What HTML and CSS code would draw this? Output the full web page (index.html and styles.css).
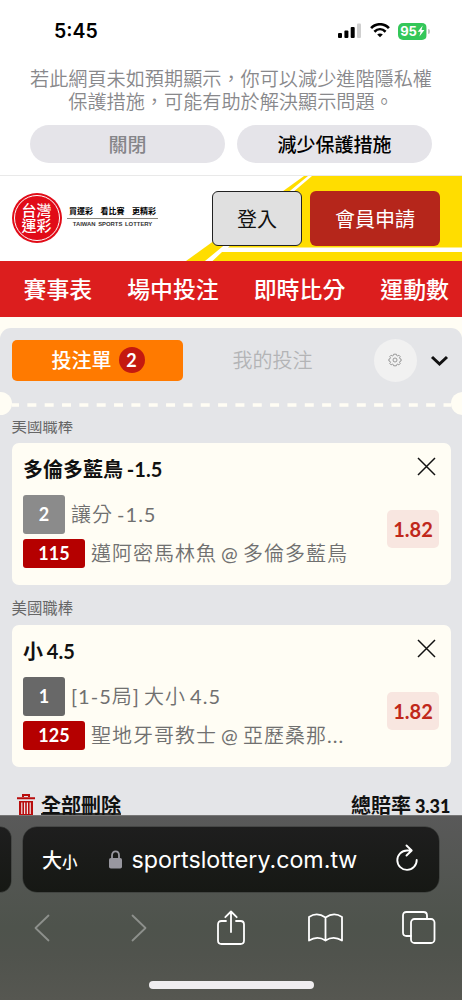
FILE: index.html
```html
<!DOCTYPE html>
<html lang="zh-Hant">
<head>
<meta charset="utf-8">
<title>台灣運彩</title>
<link rel="stylesheet" href="styles.css">
</head>
<body>
<div class="phone">
  <div class="status">
    <span class="clock">5:45</span>
    <svg class="signal" width="24" height="16" viewBox="0 0 24 16"><rect x="0" y="10" width="4" height="5" rx="1"/><rect x="6.4" y="7.4" width="4" height="7.6" rx="1"/><rect x="12.7" y="4" width="4" height="11" rx="1"/><rect x="19" y="0.5" width="4" height="14.5" rx="1" fill="#cfcfcf"/></svg>
    <svg class="wifi" width="20" height="15" viewBox="0 0 20 15" fill="none" stroke="#000" stroke-width="2.6"><path d="M1.1 5.2C6-.1 14-.1 18.9 5.2M4.4 8.7c3.3-3.2 7.900-3.200 11.200 0"/><path d="M10 14.200 7.200 11.500c1.500-1.300 4.100-1.300 5.600 0Z" fill="#000" stroke="none"/></svg>
    <div class="battery"><span>95</span><svg width="8" height="12" viewBox="0 0 7 12"><path d="M5.200.4.2 6.800h2.900L1.900 11.600 6.900 5H4Z" fill="#fff"/></svg></div>
    <span class="cap"></span>
  </div>
  <div class="notice">若此網頁未如預期顯示，你可以減少進階隱私權<br>保護措施，可能有助於解決顯示問題。</div>
  <div class="choices"><button class="pill muted">關閉</button><button class="pill">減少保護措施</button></div>

  <header class="header">
    <svg class="stripes" width="462" height="85" viewBox="0 0 462 85"><path d="M186 85 304 0h158v85Z" fill="#ffdd00"/><path d="M205 85 308 0h4L228 71.500h234v4.500H222L212.500 85Z" fill="#fff"/></svg>
    <div class="logo"><div class="seal"><span>台灣</span><span>運彩</span></div></div>
    <div class="slogan"><div class="zh"><span>買運彩</span><span>看比賽</span><span>更精彩</span></div><div class="en">TAIWAN SPORTS LOTTERY</div></div>
    <button class="login">登入</button><button class="join">會員申請</button>
  </header>
  <nav class="nav"><span>賽事表</span><span>場中投注</span><span>即時比分</span><span>運動數</span></nav>

  <main class="slip">
    <div class="tabs">
      <div class="tab">投注單<b class="count">2</b></div>
      <div class="tab2">我的投注</div>
      <div class="gear"><svg width="14" height="14" viewBox="0 0 14 14" fill="none" stroke="#858585" stroke-width=".8"><path d="M5.700 1.200h2.600l.4 1.300.9.400 1.300-.7 1.300 1.300-.7 1.300.4.900 1.200.400v1.900l-1.200.4-.4.900.7 1.300-1.300 1.300-1.300-.7-.9.400-.4 1.200H5.700l-.4-1.200-.9-.4-1.300.7-1.300-1.300.7-1.300-.4-.9-1.200-.4V6.100l1.200-.4.400-.9-.7-1.300 1.300-1.300 1.300.7.9-.4Z"/><circle cx="7" cy="7" r="2"/></svg></div>
      <svg class="chev" width="19" height="12" viewBox="0 0 19 12"><path d="m2 2 7.500 7L17 2" fill="none" stroke="#111" stroke-width="3"/></svg>
    </div>
    <div class="tear"><i class="notch"></i><svg width="439" height="4" viewBox="0 0 439 4"><path d="M-2 2h443" stroke="#fffdf4" stroke-width="3.400" stroke-dasharray="9 8.340"/></svg><i class="notch"></i></div>
    <div class="list">
      <div class="league first">美國職棒</div>
      <section class="card">
        <div class="title">多倫多藍鳥 -1.5</div>
        <svg class="close" width="19" height="19" viewBox="0 0 19 19"><path d="m1 1 17 17M18 1 1 18" stroke="#111" stroke-width="1.500"/></svg>
        <div class="row"><b class="num">2</b><span>讓分 -1.5</span></div>
        <div class="row match"><b class="code">115</b><span>邁阿密馬林魚 @ 多倫多藍鳥</span></div>
        <b class="odds">1.82</b>
      </section>
      <div class="league">美國職棒</div>
      <section class="card">
        <div class="title">小 4.5</div>
        <svg class="close" width="19" height="19" viewBox="0 0 19 19"><path d="m1 1 17 17M18 1 1 18" stroke="#111" stroke-width="1.500"/></svg>
        <div class="row"><b class="num dark">1</b><span>[1-5局] 大小 4.5</span></div>
        <div class="row match"><b class="code">125</b><span>聖地牙哥教士 @ 亞歷桑那...</span></div>
        <b class="odds">1.82</b>
      </section>
      <div class="total">
        <svg width="18" height="22" viewBox="0 0 18 22"><path d="M6 3V1h6v2M0 4.200h18" fill="none" stroke="#b80d0d" stroke-width="2"/><path d="M2 7h14v15H2Z" fill="#b80d0d"/><path d="M4.800 8.500V20M7.600 8.500V20M10.400 8.500V20M13.200 8.500V20" stroke="#eee4e6" stroke-width="1.200"/></svg>
        <span class="clear">全部刪除</span><span class="sum">總賠率 <b>3.31</b></span>
      </div>
    </div>
  </main>

  <footer class="safari">
    <div class="urls"><i class="prev"></i><div class="url">
      <span class="big">大</span><span class="small">小</span>
      <svg class="lock" width="13" height="19" viewBox="0 0 13 19"><path d="M3 9V5.500C3 0 10 0 10 5.500V9" fill="none" stroke="#98979f" stroke-width="1.800"/><rect width="13" height="10.500" y="8" rx="1.800" fill="#98979f"/></svg>
      <span class="domain">sportslottery.com.tw</span>
      <svg class="reload" width="24" height="28" viewBox="0 0 24 28" fill="none" stroke="#fff" stroke-width="1.900" stroke-linecap="round" stroke-linejoin="round"><path d="M16.500 6.500H12A9.700 9.700 0 1 0 21.700 16M11.500 1.500l5.200 5-5.200 5"/></svg>
    </div></div>
    <div class="tools">
      <svg class="back" width="16" height="28" viewBox="0 0 16 28"><path d="M14.500 1.500 1.500 14l13 12.500"/></svg>
      <svg class="forward" width="16" height="28" viewBox="0 0 16 28"><path d="m1.500 1.500 13 12.500-13 12.500"/></svg>
      <svg class="share" width="28" height="36" viewBox="0 0 28 36"><path d="M9 11H4.500Q1 11 1 14.500v16Q1 34 4.500 34h19q3.500 0 3.500-3.500v-16Q27 11 23.500 11H19M14 22V1.500M8.300 7.200 14 1.500l5.700 5.700"/></svg>
      <svg class="book" width="35" height="30" viewBox="0 0 35 30"><path d="M17.500 4.500Q9-1.500 1 4v23.500q8.500-5.300 16.500 0 8-5.300 16.500 0V4Q26-1.500 17.500 4.500ZM17.500 4.500v23"/></svg>
      <svg class="pages" width="34" height="34" viewBox="0 0 34 34"><path d="M9 25H4.500Q1 25 1 21.500v-17Q1 1 4.500 1h17Q25 1 25 4.500V8"/><rect x="9" y="8" width="23.500" height="24" rx="3.500"/></svg>
    </div>
    <div class="home"></div>
  </footer>
</div>
</body>
</html>
```
FILE: styles.css
```css
* { box-sizing: border-box; }
body { margin: 0; background: #fff; font-family: Lato, "Noto Sans CJK TC", sans-serif; }
button { border: 0; padding: 0; font-family: inherit; }
.phone { width: 462px; height: 1000px; overflow: hidden; display: flex; flex-direction: column; background: #fffdf4; }
svg { display: block; flex: none; }

.status { height: 67px; flex: none; background: #fff; display: flex; align-items: center; padding: 0 31px 5px 54px; }
.clock { font: 600 19.5px/24px Inter, sans-serif; width: 284px; flex: none; }
.wifi { margin: -1px 8px 0 8px; }
.battery { width: 29px; height: 17px; border-radius: 5px; background: linear-gradient(90deg, #34c759 95%, #a9dcb5 95%); display: flex; align-items: center; justify-content: center; color: #fff; font: 700 13px/17px Inter, sans-serif; letter-spacing: -.2px; flex: none; }
.cap { width: 2px; height: 5px; margin-left: 1px; border-radius: 0 2px 2px 0; background: #c4c4c4; flex: none; }
.notice { height: 58px; flex: none; background: #fff; color: #88888b; font: 350 19.15px/23px "Noto Sans CJK TC", sans-serif; text-align: center; white-space: nowrap; }
.choices { height: 50px; flex: none; background: #fff; padding: 0 30px; display: flex; gap: 12px; }
.pill { width: 195px; height: 38px; border-radius: 19px; background: #e5e4e9; color: #000; font: 500 19px/38px "Noto Sans CJK TC", sans-serif; }
.muted { color: #858589; }

.header { height: 86px; flex: none; position: relative; background: #fff; border-top: 1px solid #e9e9e9; display: flex; align-items: flex-start; padding: 15px 22px 0 11.5px; }
.stripes { position: absolute; left: 0; top: 0; }
.logo { width: 50px; height: 50px; border-radius: 50%; background: #e10b17; padding: 2px; margin-top: 2px; flex: none; }
.seal { width: 46px; height: 46px; border: 1px solid #fff; border-radius: 50%; color: #fff; font-size: 15px; font-weight: 500; line-height: 15px; display: flex; flex-direction: column; align-items: center; justify-content: center; }
.slogan { width: 91px; margin: 13px 0 0 5.5px; flex: none; }
.zh { display: flex; justify-content: space-between; font-size: 8px; font-weight: 700; line-height: 14px; padding: 0 2px 0 2px; height: 15px; border-bottom: 1px solid #88867c; }
.slogan .en { font: 700 5.9px/10px "Liberation Sans", sans-serif; text-align: center; white-space: nowrap; color: #333; word-spacing: 1px; }
.login, .join { position: relative; height: 55px; font-size: 20px; line-height: 52px; border-radius: 6px; flex: none; }
.login { width: 90px; margin-left: 54px; border: 1.500px solid #222; background: #e0e0e0; color: #111; }
.join { width: 130px; margin-left: 8px; background: #b5261b; color: #fff; }
.nav { height: 56px; flex: none; background: #dc1e1e; color: #fff; font-weight: 500; font-size: 22.900px; line-height: 56px; display: flex; gap: 35px; padding-left: 23.500px; white-space: nowrap; }

.slip { height: 487px; flex: none; margin-top: 11px; background: #e4e5e8; border-radius: 11px 11px 0 0; overflow: hidden; }
.tabs { height: 64px; display: flex; align-items: center; padding-left: 11.500px; }
.tab { width: 171px; height: 41px; border-radius: 5px; background: #ff7a00; color: #fff; display: flex; align-items: center; justify-content: center; gap: 7px; font-size: 20px; font-weight: 500; line-height: 40px; padding-left: 2px; }
.count { width: 26px; height: 26px; border-radius: 50%; background: #c4190f; font-size: 18px; line-height: 26px; text-align: center; }
.tab2 { color: #b3b4b6; font-size: 20px; font-weight: 350; margin-left: 50px; width: 141px; line-height: 28px; margin-top: -1px; }
.gear { width: 43px; height: 43px; border-radius: 50%; background: #f1f1f1; display: grid; place-items: center; }
.chev { margin: 2px 0 0 13px; }
.tear { height: 23px; display: flex; justify-content: space-between; align-items: center; margin: 0 -11.500px; }
.tear svg { margin-top: 3px; }
.notch { width: 23px; height: 23px; border-radius: 50%; background: #fffdf4; }
.list { margin-top: 6px; height: 394px; overflow: hidden; padding: 0 11.500px; }
.league { height: 40px; padding-top: 12px; color: #666; font-size: 15.400px; line-height: 22px; }
.first { height: 22px; padding: 0; margin-top: -6px; margin-bottom: 6px; }
.card { position: relative; height: 142px; border-radius: 7px; background: #fffdf4; padding: 14px 11.500px 0; }
.title { font-size: 20px; font-weight: 700; line-height: 24px; color: #111; word-spacing: -1px; }
.close { position: absolute; right: 15px; top: 14px; }
.row { display: flex; align-items: center; gap: 6px; height: 39px; margin-top: 14px; font-family: Lato, "Noto Sans CJK TC DemiLight", "Noto Sans CJK TC", sans-serif; font-size: 20px; font-weight: 400; letter-spacing: 1px; word-spacing: -2px; color: #707070; white-space: nowrap; }
.row span { margin-top: -2px; }
.row b { color: #fff; border-radius: 3px; text-align: center; font-size: 18px; letter-spacing: 0; }
.num { width: 42px; height: 39px; line-height: 39px; background: #8b8b8b; }
.dark { background: #686868; }
.match { height: 29px; margin-top: 5px; }
.code { width: 62px; height: 29px; line-height: 29px; background: #b50000; }
.odds { position: absolute; right: 11.500px; top: 67px; width: 52px; height: 38px; border-radius: 5px; background: #f8e6e0; color: #c0281b; font-size: 20px; line-height: 38px; text-align: center; }
.total { height: 47px; padding: 26px 0 0 5.500px; display: flex; font-size: 20px; font-weight: 700; color: #111; line-height: 24px; }
.total svg { margin-top: 1px; }
.clear { margin-left: 6px; height: 22px; border-bottom: 2px solid #333; }
.sum { margin-left: auto; white-space: nowrap; word-spacing: -1px; }
.sum b { font-size: 18px; }

.safari { height: 185px; flex: none; background: linear-gradient(#595959, #4e534c 60%, #50534d 75%, #565751); border-top: 1px solid #777; color: #fff; }
.urls { display: flex; gap: 12px; padding-top: 11px; }
.prev, .url { height: 65px; background: linear-gradient(#1e1e1e, #161814); box-shadow: 0 0 0 .5px #343734; }
.prev { width: 11px; border-radius: 0 14px 14px 0; }
.url { width: 416px; border-radius: 14px; display: flex; align-items: center; padding-left: 19px; }
.big { font: 500 20px/30px "Noto Sans CJK TC", sans-serif; }
.small { font: 500 15.500px/30px "Noto Sans CJK TC", sans-serif; margin-top: 2px; }
.lock { margin-left: 31px; }
.domain { font: 400 23.250px/30px Inter, sans-serif; margin: 1px 0 0 10px; width: 225px; white-space: nowrap; }
.reload { margin: -3px 0 0 38.500px; }
.tools { height: 72px; padding-left: 34px; display: flex; align-items: center; }
.tools svg { fill: none; stroke: #fff; stroke-width: 1.800; stroke-linecap: round; stroke-linejoin: round; }
.tools .back, .tools .forward { stroke: #8d908c; }
.forward { margin-left: 81px; }
.share { margin-left: 70px; }
.book { margin-left: 62.500px; }
.pages { margin-left: 59.500px; }
.home { width: 165px; height: 8px; border-radius: 4px; background: #efedef; margin: 17px auto 0; }
```
